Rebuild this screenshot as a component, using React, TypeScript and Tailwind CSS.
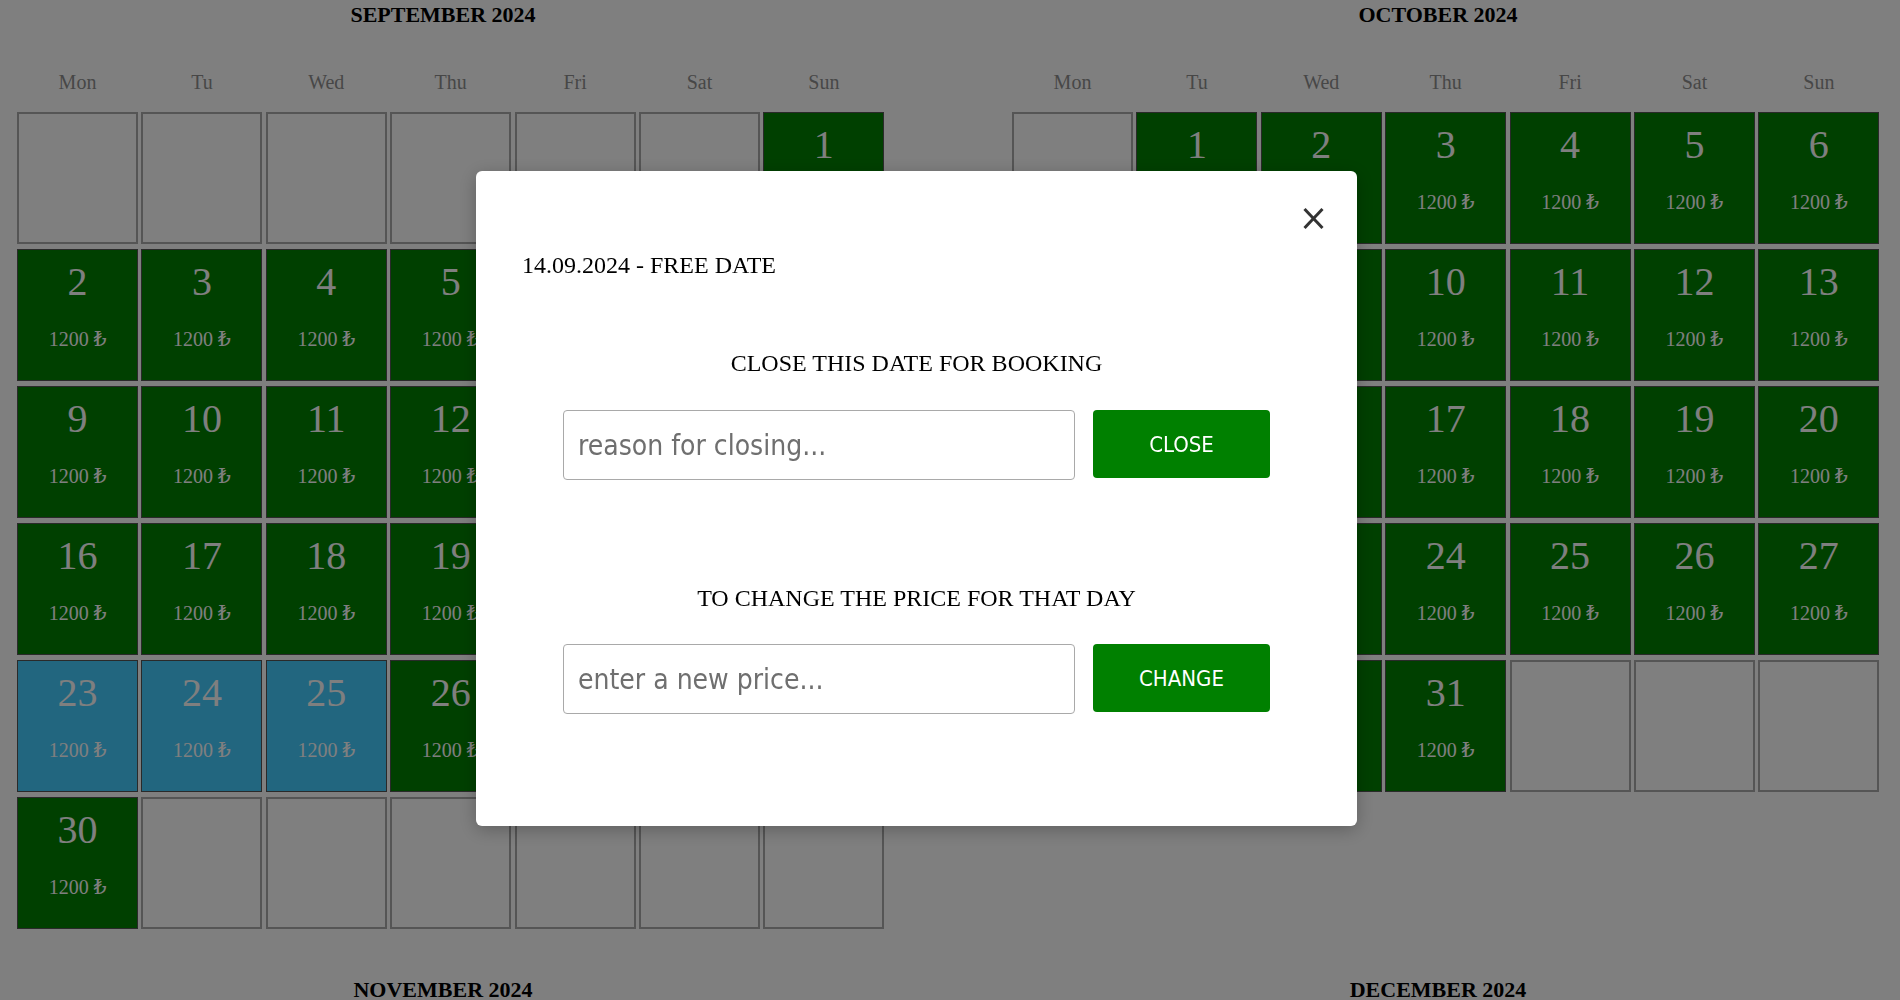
import React from "react";

type Cell = { day?: number; kind?: "free" | "booked" };

function buildMonth(startOffset: number, days: number, booked: number[] = []): Cell[] {
  const cells: Cell[] = [];
  for (let i = 0; i < startOffset; i++) cells.push({});
  for (let d = 1; d <= days; d++) cells.push({ day: d, kind: booked.includes(d) ? "booked" : "free" });
  while (cells.length % 7 !== 0) cells.push({});
  return cells;
}

const months = [
  { title: "SEPTEMBER 2024", cells: buildMonth(6, 30, [23, 24, 25]) },
  { title: "OCTOBER 2024", cells: buildMonth(1, 31) },
  { title: "NOVEMBER 2024", cells: buildMonth(4, 30) },
  { title: "DECEMBER 2024", cells: buildMonth(6, 31) },
];

const weekDays = ["Mon", "Tu", "Wed", "Thu", "Fri", "Sat", "Sun"];

function DayCell({ cell }: { cell: Cell }) {
  if (!cell.day) {
    return <div className="border-2 border-[#aaaaaa] bg-white" />;
  }
  const bg = cell.kind === "booked" ? "bg-[#44ccff]" : "bg-[#008000]";
  return (
    <div className={`${bg} border border-[#555555] flex flex-col items-center pt-[12px] text-white`}>
      <div className="text-[40px] leading-[40px]">{cell.day}</div>
      <div className="text-[20px] leading-[20px] mt-[27px]">1200 ₺</div>
    </div>
  );
}

function Month({ title, cells }: { title: string; cells: Cell[] }) {
  return (
    <div className="w-[886px]">
      <div className="mt-[2px] text-center text-[22px] leading-[25px] font-bold text-black">{title}</div>
      <div className="mt-[44px] ml-[17px] grid grid-cols-[repeat(7,121px)] gap-x-[3.4px] text-center text-[20px] leading-[23px] text-[#8f8f8f]">
        {weekDays.map((d) => (
          <div key={d}>{d}</div>
        ))}
      </div>
      <div className="mt-[18px] ml-[17px] grid grid-cols-[repeat(7,121px)] auto-rows-[132px] gap-x-[3.4px] gap-y-[5px]">
        {cells.map((c, i) => (
          <DayCell key={i} cell={c} />
        ))}
      </div>
    </div>
  );
}

export default function App() {
  const sans = { fontFamily: '"DejaVu Sans Condensed", "DejaVu Sans", sans-serif' };
  return (
    <div
      className="relative h-screen w-full overflow-hidden bg-white"
      style={{ fontFamily: '"Liberation Serif", "DejaVu Serif", serif' }}
    >
      <div className="grid grid-cols-[886px_886px] gap-x-[109px] gap-y-[46px]">
        {months.map((m) => (
          <Month key={m.title} title={m.title} cells={m.cells} />
        ))}
      </div>

      <div className="fixed inset-0 bg-black/50 flex items-start">
        <div className="relative mt-[171px] ml-[476px] w-[881px] rounded-md bg-white shadow-[0_4px_18px_rgba(0,0,0,0.25)] pt-[80px] pb-[112px]">
          <button className="absolute top-[36px] right-[32px] w-[23px] h-[23px]" aria-label="close">
            <svg viewBox="0 0 23 23" width="23" height="23">
              <line x1="2.5" y1="2" x2="20.5" y2="21" stroke="#333" strokeWidth="3" />
              <line x1="20.5" y1="2" x2="2.5" y2="21" stroke="#333" strokeWidth="3" />
            </svg>
          </button>
          <div className="pl-[46px] text-[24px] leading-[28px] text-black">14.09.2024 - FREE DATE</div>

          <div className="mt-[70px] text-center text-[24px] leading-[28px] text-black">CLOSE THIS DATE FOR BOOKING</div>
          <div className="mt-[33px] flex justify-center items-start gap-[18px]" style={sans}>
            <input
              className="w-[512px] h-[70px] rounded-[4px] border border-[#a9a9a9] pl-[14px] text-[28px] placeholder:text-[#6f6f6f] outline-none"
              placeholder="reason for closing..."
            />
            <button className="w-[177px] h-[68px] rounded-[4px] bg-[#008000] text-white text-[22px]">CLOSE</button>
          </div>

          <div className="mt-[104px] text-center text-[24px] leading-[28px] text-black">TO CHANGE THE PRICE FOR THAT DAY</div>
          <div className="mt-[32px] flex justify-center items-start gap-[18px]" style={sans}>
            <input
              className="w-[512px] h-[70px] rounded-[4px] border border-[#a9a9a9] pl-[14px] text-[28px] placeholder:text-[#6f6f6f] outline-none"
              placeholder="enter a new price..."
            />
            <button className="w-[177px] h-[68px] rounded-[4px] bg-[#008000] text-white text-[22px]">CHANGE</button>
          </div>
        </div>
      </div>
    </div>
  );
}
